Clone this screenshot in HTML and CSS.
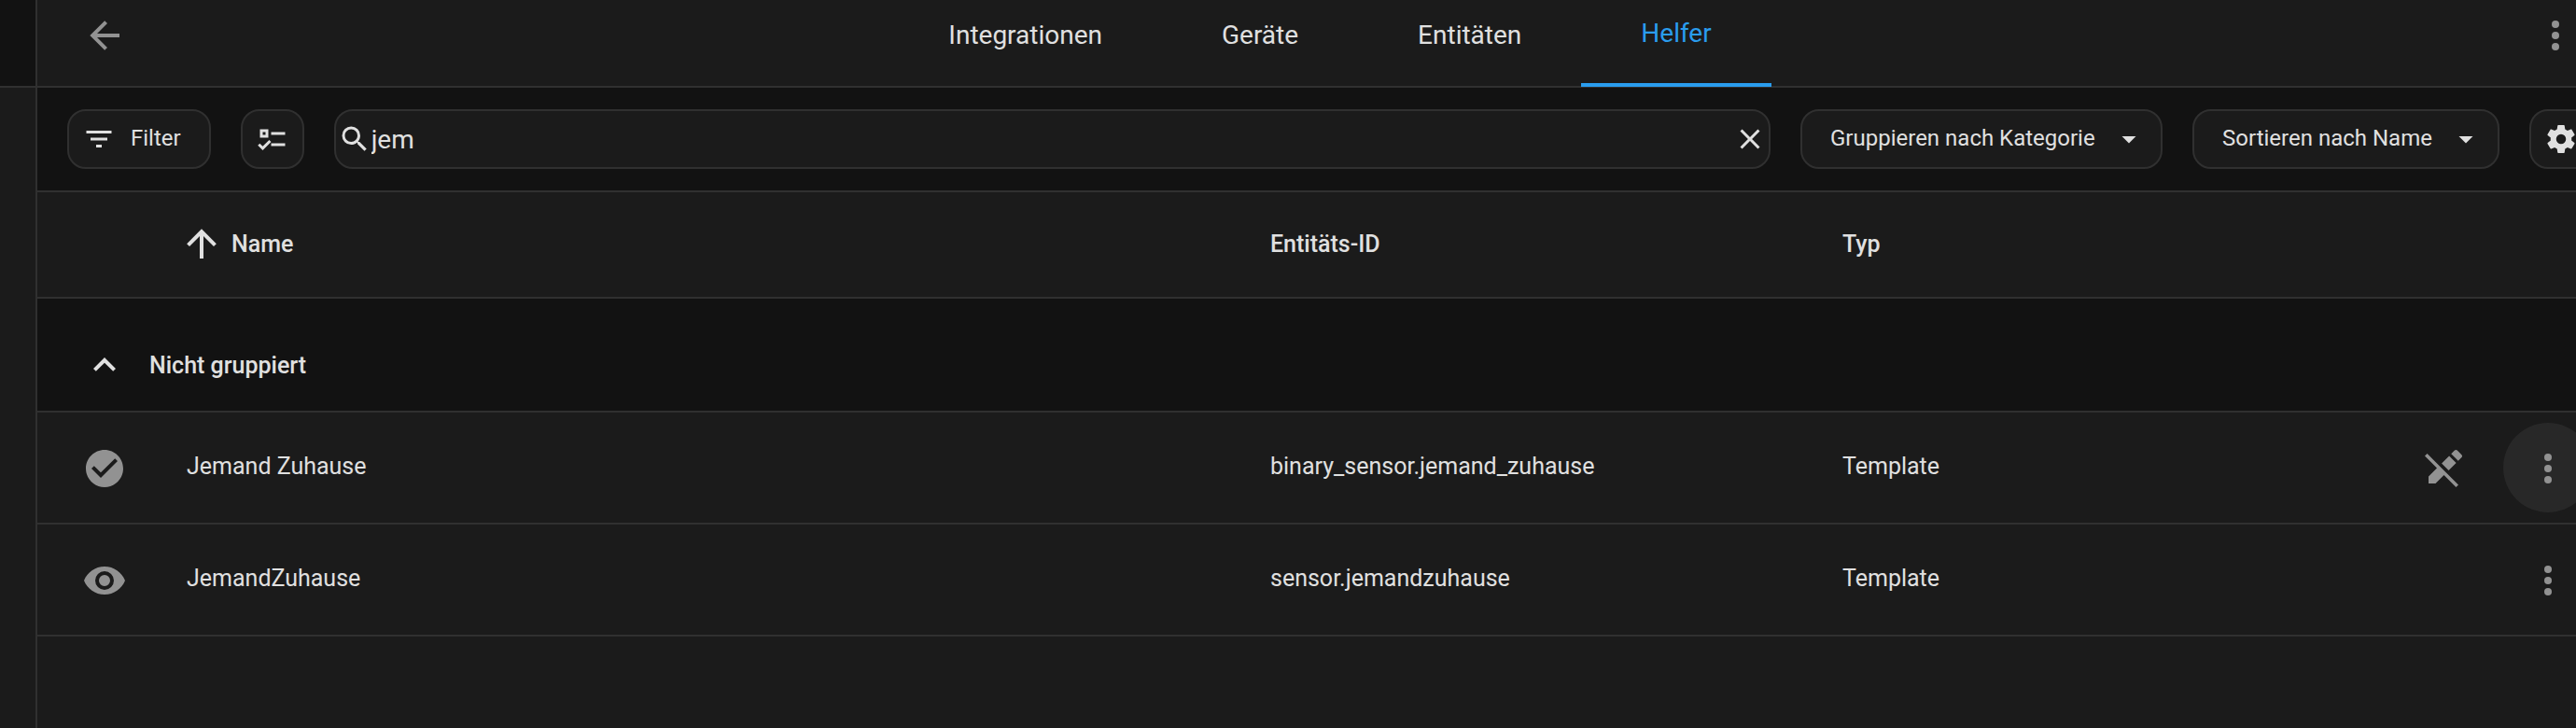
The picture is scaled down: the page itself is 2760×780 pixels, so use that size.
FILE: index.html
```
<!DOCTYPE html>
<html lang="de">
<head>
	<meta charset="UTF-8">
	<title>Helfer</title>
	<link rel="stylesheet" href="styles.css">
</head>
<body>
	<!-- icons -->
	<svg class="sprite" aria-hidden="true">
		<symbol id="arrow-left" viewBox="0 0 24 24"><path d="M20,11V13H8L13.5,18.5L12.08,19.92L4.16,12L12.08,4.08L13.5,5.5L8,11H20Z"/></symbol>
		<symbol id="arrow-up" viewBox="0 0 24 24"><path d="M13,20H11V8L5.5,13.5L4.08,12.08L12,4.16L19.92,12.08L18.5,13.5L13,8V20Z"/></symbol>
		<symbol id="dots" viewBox="0 0 24 24"><circle cx="12" cy="6" r="2"/><circle cx="12" cy="12" r="2"/><circle cx="12" cy="18" r="2"/></symbol>
		<symbol id="filter" viewBox="0 0 24 24"><path d="M6,13H18V11H6M3,6V8H21V6M10,18H14V16H10V18Z"/></symbol>
		<symbol id="checks" viewBox="0 0 24 24"><path d="M3,5H9V11H3V5M5,7V9H7V7H5M11,7H21V9H11V7M11,15H21V17H11V15M5,20L1.5,16.5L2.91,15.09L5,17.17L9.59,12.59L11,14L5,20Z"/></symbol>
		<symbol id="magnify" viewBox="0 0 24 24"><path d="M9.5,3A6.5,6.5 0 0,1 16,9.5C16,11.11 15.41,12.59 14.44,13.73L14.71,14H15.5L20.5,19L19,20.5L14,15.5V14.71L13.73,14.44C12.59,15.41 11.11,16 9.5,16A6.5,6.5 0 0,1 3,9.5A6.5,6.5 0 0,1 9.5,3M9.5,5C7,5 5,7 5,9.5C5,12 7,14 9.5,14C12,14 14,12 14,9.5C14,7 12,5 9.5,5Z"/></symbol>
		<symbol id="close" viewBox="0 0 24 24"><path d="M19,6.41L17.59,5L12,10.59L6.41,5L5,6.41L10.59,12L5,17.59L6.41,19L12,13.41L17.59,19L19,17.59L13.41,12L19,6.41Z"/></symbol>
		<symbol id="caret" viewBox="0 0 24 24"><path d="M7,10L12,15L17,10H7Z"/></symbol>
		<symbol id="cog" viewBox="0 0 24 24"><path d="M12,15.5A3.5,3.5 0 0,1 8.5,12A3.5,3.5 0 0,1 12,8.5A3.5,3.5 0 0,1 15.5,12A3.5,3.5 0 0,1 12,15.5M19.43,12.97C19.47,12.65 19.5,12.33 19.5,12C19.5,11.67 19.47,11.34 19.43,11L21.54,9.37C21.73,9.22 21.78,8.95 21.66,8.73L19.66,5.27C19.54,5.05 19.27,4.96 19.05,5.05L16.56,6.05C16.04,5.66 15.5,5.32 14.87,5.07L14.5,2.42C14.46,2.18 14.25,2 14,2H10C9.75,2 9.54,2.18 9.5,2.42L9.13,5.07C8.5,5.32 7.96,5.66 7.44,6.05L4.95,5.05C4.73,4.96 4.46,5.05 4.34,5.27L2.34,8.73C2.21,8.95 2.27,9.22 2.46,9.37L4.57,11C4.53,11.34 4.5,11.67 4.5,12C4.5,12.33 4.53,12.65 4.57,12.97L2.46,14.63C2.27,14.78 2.21,15.05 2.34,15.27L4.34,18.73C4.46,18.95 4.73,19.03 4.95,18.95L7.44,17.94C7.96,18.34 8.5,18.68 9.13,18.93L9.5,21.58C9.54,21.82 9.75,22 10,22H14C14.25,22 14.46,21.82 14.5,21.58L14.87,18.93C15.5,18.67 16.04,18.34 16.56,17.94L19.05,18.95C19.27,19.03 19.54,18.95 19.66,18.73L21.66,15.27C21.78,15.05 21.73,14.78 21.54,14.63L19.43,12.97Z"/></symbol>
		<symbol id="chevron-up" viewBox="0 0 24 24"><path d="M7.41,15.41L12,10.83L16.59,15.41L18,14L12,8L6,14L7.41,15.41Z"/></symbol>
		<symbol id="check-circle" viewBox="0 0 24 24"><path d="M12 2C6.5 2 2 6.5 2 12S6.5 22 12 22 22 17.5 22 12 17.5 2 12 2M10 17L5 12L6.41 10.59L10 14.17L17.59 6.58L19 8L10 17Z"/></symbol>
		<symbol id="eye" viewBox="0 0 24 24"><path d="M12,9A3,3 0 0,0 9,12A3,3 0 0,0 12,15A3,3 0 0,0 15,12A3,3 0 0,0 12,9M12,17A5,5 0 0,1 7,12A5,5 0 0,1 12,7A5,5 0 0,1 17,12A5,5 0 0,1 12,17M12,4.5C7,4.5 2.73,7.61 1,12C2.73,16.39 7,19.5 12,19.5C17,19.5 21.27,16.39 23,12C21.27,7.61 17,4.5 12,4.5Z"/></symbol>
		<symbol id="pencil-off" viewBox="0 0 24 24"><path d="M18.66,2C18.4,2 18.16,2.09 17.97,2.28L16.13,4.13L19.88,7.88L21.72,6.03C22.11,5.64 22.11,5 21.72,4.63L19.38,2.28C19.18,2.09 18.91,2 18.66,2M3.28,4L2,5.28L8.5,11.75L4,16.25V20H7.75L12.25,15.5L18.72,22L20,20.72L13.5,14.25L9.75,10.5L3.28,4M15.06,5.19L11.03,9.22L14.78,12.97L18.81,8.94L15.06,5.19Z"/></symbol>
	</svg>

	<div class="app">
		<div class="sidebar">
			<div class="sidebar-top"></div>
		</div>
		<div class="main">
			<div class="header">
				<button type="button" class="icon-btn" aria-label="Zurück"><svg class="icon"><use href="#arrow-left"/></svg></button>
				<nav class="tabs">
					<a href="#integrationen" class="tab">Integrationen</a>
					<a href="#geraete" class="tab">Geräte</a>
					<a href="#entitaeten" class="tab">Entitäten</a>
					<a href="#helfer" class="tab active">Helfer</a>
				</nav>
				<button type="button" class="icon-btn" aria-label="Menü"><svg class="icon"><use href="#dots"/></svg></button>
			</div>

			<div class="toolbar">
				<button type="button" class="chip chip-filter"><svg class="icon-s"><use href="#filter"/></svg><span>Filter</span></button>
				<button type="button" class="chip chip-icon" aria-label="Auswählen"><svg class="icon-s"><use href="#checks"/></svg></button>
				<div class="chip search">
					<svg class="icon-s"><use href="#magnify"/></svg>
					<input type="text" class="search-input" value="jem" aria-label="Suche">
					<button type="button" class="search-clear" aria-label="Leeren"><svg class="icon-s"><use href="#close"/></svg></button>
				</div>
				<div class="chip chip-select">
					<select aria-label="Gruppieren">
						<option>Gruppieren nach Kategorie</option>
					</select>
					<svg class="icon-s"><use href="#caret"/></svg>
				</div>
				<div class="chip chip-select">
					<select aria-label="Sortieren">
						<option>Sortieren nach Name</option>
					</select>
					<svg class="icon-s"><use href="#caret"/></svg>
				</div>
				<button type="button" class="chip chip-icon" aria-label="Einstellungen"><svg class="icon-s"><use href="#cog"/></svg></button>
			</div>

			<table class="table">
				<colgroup>
					<col class="col-icon">
					<col>
					<col class="col-entity">
					<col class="col-type">
					<col class="col-edit">
					<col class="col-menu">
				</colgroup>
				<thead>
					<tr>
						<th></th>
						<th><span class="sort"><svg class="icon"><use href="#arrow-up"/></svg>Name</span></th>
						<th>Entitäts-ID</th>
						<th>Typ</th>
						<th></th>
						<th></th>
					</tr>
				</thead>
				<tbody>
					<tr class="group">
						<td colspan="6">
							<button type="button" class="group-btn"><svg class="icon"><use href="#chevron-up"/></svg>Nicht gruppiert</button>
						</td>
					</tr>
					<tr>
						<td class="cell-icon"><svg class="icon"><use href="#check-circle"/></svg></td>
						<td>Jemand Zuhause</td>
						<td>binary_sensor.jemand_zuhause</td>
						<td>Template</td>
						<td class="cell-icon"><svg class="icon"><use href="#pencil-off"/></svg></td>
						<td class="cell-menu"><button type="button" class="icon-btn hover" aria-label="Aktionen"><svg class="icon"><use href="#dots"/></svg></button></td>
					</tr>
					<tr>
						<td class="cell-icon"><svg class="icon"><use href="#eye"/></svg></td>
						<td>JemandZuhause</td>
						<td>sensor.jemandzuhause</td>
						<td>Template</td>
						<td></td>
						<td class="cell-menu"><button type="button" class="icon-btn" aria-label="Aktionen"><svg class="icon"><use href="#dots"/></svg></button></td>
					</tr>
				</tbody>
			</table>
		</div>
	</div>
</body>
</html>
```
FILE: styles.css
```
* {
	margin: 0;
	padding: 0;
	box-sizing: border-box;
}
body {
	background-color: #1b1b1b;
	color: #e0e0e0;
	font-family: Roboto, "Liberation Sans", sans-serif;
	font-size: 25px;
	overflow: hidden;
}
button, input, select {
	font: inherit;
	color: inherit;
	background: none;
	border: 0;
	outline: 0;
}
a {
	color: inherit;
	text-decoration: none;
}
.sprite {
	display: none;
}
.icon {
	display: block;
	flex: none;
	width: 48px;
	height: 48px;
	fill: currentColor;
}
.icon-s {
	display: block;
	flex: none;
	width: 36px;
	height: 36px;
	fill: currentColor;
}
.icon-btn {
	display: flex;
	align-items: center;
	justify-content: center;
	width: 96px;
	height: 96px;
	border-radius: 50%;
	color: #929292;
}
.icon-btn.hover {
	background-color: #282828;
}

/* the content runs out of the window on the right */
.app {
	display: flex;
	width: calc(100% + 50px);
	min-height: 100vh;
}
.sidebar {
	width: 40px;
	flex: none;
	border-right: 2px solid #303030;
}
.sidebar-top {
	height: 94px;
	background-color: #121212;
	border-bottom: 2px solid #303030;
}
.main {
	flex: 1;
	min-width: 0;
}

/* header */
.header {
	display: flex;
	justify-content: space-between;
	align-items: center;
	height: 94px;
	padding: 0 24px 16px;
	border-bottom: 2px solid #303030;
}
.tabs {
	display: flex;
	height: 76px;
	font-size: 28px;
}
.tab {
	height: 93px;
	padding: 0 64px;
	line-height: 76px;
}
.tab.active {
	color: #2a9dee;
	border-bottom: 4px solid #2a9dee;
	line-height: 72px;
}

/* toolbar */
.toolbar {
	display: flex;
	align-items: center;
	gap: 32px;
	height: 112px;
	padding: 0 32px;
	background-color: #121212;
	border-bottom: 2px solid #303030;
}
.chip {
	display: flex;
	align-items: center;
	flex: none;
	height: 64px;
	border: 2px solid #303030;
	border-radius: 20px;
	background-color: #1b1b1b;
	font-size: 24px;
}
.chip-filter {
	gap: 16px;
	padding: 0 30px 0 14px;
}
.chip-filter span {
	padding-bottom: 2px;
}
.chip-icon {
	padding: 0 14px;
}
.search {
	flex: 1;
	padding: 0 2px;
}
.search-input {
	flex: 1;
	font-size: 28px;
}
.chip-select {
	display: grid;
}
.chip-select select {
	grid-area: 1 / 1;
	appearance: none;
	height: 60px;
	padding: 0 70px 2px 30px;
}
.chip-select .icon-s {
	grid-area: 1 / 1;
	justify-self: end;
	margin-right: 16px;
	pointer-events: none;
}

/* table */
.table {
	width: 100%;
	table-layout: fixed;
	border-collapse: separate;
	border-spacing: 0;
}
.col-icon {
	width: 128px;
}
.col-entity {
	width: 613px;
}
.col-type {
	width: 604px;
}
.col-edit {
	width: 104px;
}
.col-menu {
	width: 160px;
}
.table th {
	height: 114px;
	padding: 0 32px 2px;
	border-bottom: 2px solid #303030;
	font-weight: 500;
	text-align: left;
}
.table td {
	height: 120px;
	padding: 0 32px 4px;
	border-bottom: 2px solid #303030;
}
.sort {
	display: flex;
	align-items: center;
	gap: 8px;
	margin-left: -8px;
}
.table .group td {
	height: 122px;
	padding: 22px 0 0 48px;
	background-color: #121212;
}
.group-btn {
	display: flex;
	align-items: center;
	gap: 24px;
	font-weight: 500;
}
.table .cell-icon {
	padding: 2px 0 0 48px;
	color: #929292;
}
.table .cell-menu {
	padding: 0 32px;
}
.cell-menu .icon-btn {
	padding-top: 2px;
}
```
